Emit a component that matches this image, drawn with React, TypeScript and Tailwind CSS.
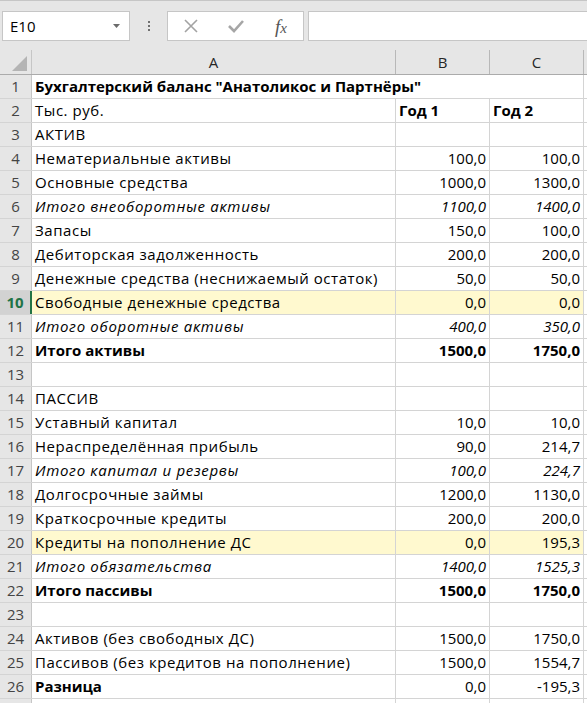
import React from 'react';

type Style = 'normal' | 'bold' | 'italic';

interface Row {
  n: number;
  a?: string;
  b?: string;
  c?: string;
  style?: Style;
  numStyle?: Style;
  hl?: boolean;
}

const rows: Row[] = [
  { n: 1 },
  { n: 2, a: 'Тыс. руб.' },
  { n: 3, a: 'АКТИВ' },
  { n: 4, a: 'Нематериальные активы', b: '100,0', c: '100,0' },
  { n: 5, a: 'Основные средства', b: '1000,0', c: '1300,0' },
  { n: 6, a: 'Итого внеоборотные активы', b: '1100,0', c: '1400,0', style: 'italic' },
  { n: 7, a: 'Запасы', b: '150,0', c: '100,0' },
  { n: 8, a: 'Дебиторская задолженность', b: '200,0', c: '200,0' },
  { n: 9, a: 'Денежные средства (неснижаемый остаток)', b: '50,0', c: '50,0' },
  { n: 10, a: 'Свободные денежные средства', b: '0,0', c: '0,0', hl: true },
  { n: 11, a: 'Итого оборотные активы', b: '400,0', c: '350,0', style: 'italic' },
  { n: 12, a: 'Итого активы', b: '1500,0', c: '1750,0', style: 'bold' },
  { n: 13 },
  { n: 14, a: 'ПАССИВ' },
  { n: 15, a: 'Уставный капитал', b: '10,0', c: '10,0' },
  { n: 16, a: 'Нераспределённая прибыль', b: '90,0', c: '214,7' },
  { n: 17, a: 'Итого капитал и резервы', b: '100,0', c: '224,7', style: 'italic' },
  { n: 18, a: 'Долгосрочные займы', b: '1200,0', c: '1130,0' },
  { n: 19, a: 'Краткосрочные кредиты', b: '200,0', c: '200,0' },
  { n: 20, a: 'Кредиты на пополнение ДС', b: '0,0', c: '195,3', hl: true },
  { n: 21, a: 'Итого обязательства', b: '1400,0', c: '1525,3', style: 'italic' },
  { n: 22, a: 'Итого пассивы', b: '1500,0', c: '1750,0', style: 'bold' },
  { n: 23 },
  { n: 24, a: 'Активов (без свободных ДС)', b: '1500,0', c: '1750,0' },
  { n: 25, a: 'Пассивов (без кредитов на пополнение)', b: '1500,0', c: '1554,7' },
  { n: 26, a: 'Разница', b: '0,0', c: '-195,3', style: 'bold', numStyle: 'normal' },
  { n: 27 },
];

// regular/italic labels get a bit of tracking to match the Calibri widths
const styleClass = (s?: Style) =>
  s === 'bold' ? 'font-bold' : s === 'italic' ? 'italic tracking-[0.7px]' : 'tracking-[0.55px]';

const font = { fontFamily: '"Open Sans", "Liberation Sans", sans-serif' };

function Toolbar() {
  return (
    <div className="h-[50px] bg-[#e6e6e6] border-t border-[#c6c6c6] flex items-start pt-[10px] pl-[2px]">
      {/* name box */}
      <div className="w-[128px] h-[30px] bg-white border border-[#c6c6c6] flex items-center justify-between pl-[7px] pr-[9px]">
        <span className="text-[15px] text-black">E10</span>
        <svg width="7" height="4" viewBox="0 0 7 4">
          <path d="M0 0 H7 L3.5 4 Z" fill="#6b6b6b" />
        </svg>
      </div>
      {/* dots */}
      <div className="w-[37px] h-[30px] flex flex-col items-center justify-center gap-[2px]">
        <div className="w-[2px] h-[2px] bg-[#707070]" />
        <div className="w-[2px] h-[2px] bg-[#707070]" />
        <div className="w-[2px] h-[2px] bg-[#707070]" />
      </div>
      {/* cancel / enter / fx */}
      <div className="w-[137px] h-[30px] bg-white border border-[#c6c6c6] flex items-center">
        <div className="w-[45px] flex justify-center pl-[1px]">
          <svg width="14" height="14" viewBox="0 0 14 14">
            <path d="M1 1 L13 13 M13 1 L1 13" stroke="#a3a3a3" strokeWidth="1.6" />
          </svg>
        </div>
        <div className="w-[46px] flex justify-center">
          <svg width="16" height="14" viewBox="0 0 16 14">
            <path d="M1 7 L6 12 L15 2" stroke="#a6a6a6" strokeWidth="2.6" fill="none" />
          </svg>
        </div>
        <div className="flex-1 flex justify-center">
          <span className="text-[19px] italic text-[#555] leading-none" style={{ fontFamily: '"Liberation Serif", serif' }}>
            f<span className="text-[15px]">x</span>
          </span>
        </div>
      </div>
      <div className="w-[4px]" />
      <div className="flex-1 h-[30px] bg-white border border-[#c6c6c6] border-r-0" />
    </div>
  );
}

function HeaderRow() {
  return (
    <div className="h-[25px] flex bg-[#e6e6e6] border-b border-[#ababab] text-[15px] text-[#262626]">
      <div className="w-[32px] border-r border-[#c6c6c6] relative">
        <svg className="absolute right-[4px] bottom-[3px]" width="15" height="15" viewBox="0 0 15 15">
          <path d="M15 0 V15 H0 Z" fill="#b4b4b4" />
        </svg>
      </div>
      <div className="w-[364px] border-r border-[#b8b8b8] flex items-center justify-center">A</div>
      <div className="w-[94px] border-r border-[#b8b8b8] flex items-center justify-center">B</div>
      <div className="w-[94px] border-r border-[#b8b8b8] flex items-center justify-center">C</div>
      <div className="flex-1" />
    </div>
  );
}

function SheetRow({ r }: { r: Row }) {
  const sel = r.n === 10;
  const bg = r.hl ? 'bg-[#fff9cf]' : 'bg-white';
  const cell = `h-full border-r border-[#d4d4d4] flex items-center ${bg}`;
  const ns = (r.numStyle ?? r.style) === 'bold' ? 'font-bold' : (r.numStyle ?? r.style) === 'italic' ? 'italic' : '';
  return (
    <div className="h-[24px] flex border-b border-[#d4d4d4] text-[15px] text-black">
      <div
        className={`w-[32px] h-full flex items-center justify-center text-[15px] ${
          sel
            ? 'bg-[#d2d2d2] text-[#217346] font-bold border-r-2 border-[#217346]'
            : 'bg-[#e6e6e6] text-[#444] border-r border-[#c6c6c6]'
        }`}
      >
        {r.n === 27 ? '' : r.n}
      </div>
      {r.n === 1 ? (
        <div className="w-[552px] h-full border-r border-[#d4d4d4] flex items-center pl-[3px] font-bold whitespace-nowrap bg-white">
          Бухгалтерский баланс "Анатоликос и Партнёры"
        </div>
      ) : (
        <>
          <div className={`w-[364px] pl-[3px] whitespace-nowrap ${cell} ${styleClass(r.style)}`}>{r.a}</div>
          {r.n === 2 ? (
            <>
              <div className={`w-[94px] pl-[3px] font-bold ${cell}`}>Год 1</div>
              <div className={`w-[94px] pl-[3px] font-bold ${cell}`}>Год 2</div>
            </>
          ) : (
            <>
              <div className={`w-[94px] justify-end pr-[3px] ${cell} ${ns}`}>{r.b}</div>
              <div className={`w-[94px] justify-end pr-[3px] ${cell} ${ns}`}>{r.c}</div>
            </>
          )}
        </>
      )}
      <div className="flex-1 h-full bg-white" />
    </div>
  );
}

export default function App() {
  return (
    <div className="w-[587px] h-[703px] overflow-hidden bg-white" style={font}>
      <Toolbar />
      <HeaderRow />
      {rows.map(r => (
        <SheetRow key={r.n} r={r} />
      ))}
    </div>
  );
}
